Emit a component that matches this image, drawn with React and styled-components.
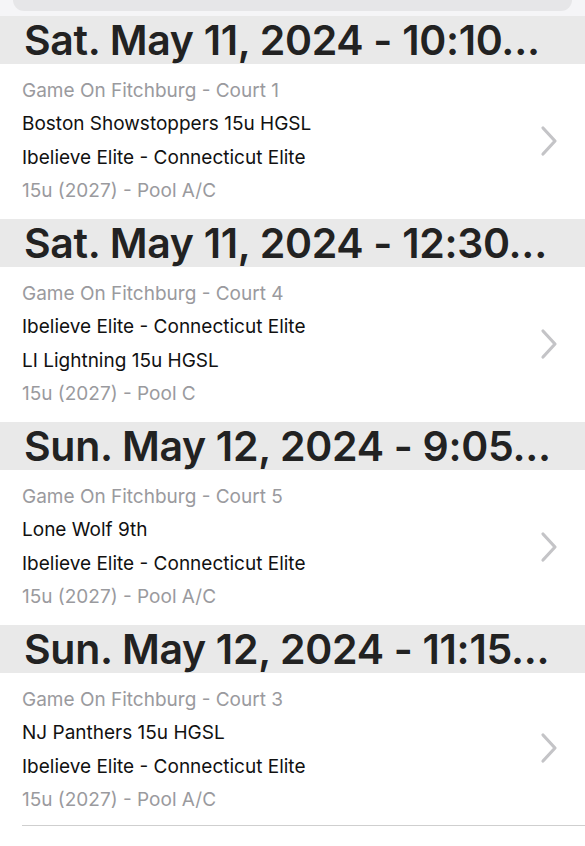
import React from "react";
import styled, { createGlobalStyle } from "styled-components";

const GlobalStyle = createGlobalStyle`
  html, body {
    margin: 0;
    padding: 0;
    background: #ffffff;
    font-family: Inter, "Noto Sans", "Liberation Sans", sans-serif;
    -webkit-font-smoothing: antialiased;
  }
`;

const Page = styled.div`
  width: 585px;
  height: 846px;
  overflow: hidden;
  background: #ffffff;
`;

const SearchArea = styled.div`
  height: 16px;
  background: #f5f5f7;
  display: flex;
  align-items: flex-start;
  padding: 0 13px;
  box-sizing: border-box;
`;

const SearchBar = styled.div`
  flex: 1;
  height: 11px;
  background: #e6e6e8;
  border-radius: 0 0 12px 12px;
`;

const SectionHeader = styled.div`
  height: 48px;
  background: #e9e9e9;
  padding: 0 24px;
  display: flex;
  align-items: center;
  font-size: 41px;
  font-weight: 600;
  letter-spacing: -0.3px;
  color: #222222;
  white-space: nowrap;
  overflow: hidden;
`;

const Row = styled.div`
  height: ${p => (p.last ? "153px" : "155px")};
  box-sizing: border-box;
  padding: 10px 26px 0 ${p => (p.last ? "0" : "22px")};
  margin-left: ${p => (p.last ? "22px" : "0")};
  display: flex;
  align-items: center;
  border-bottom: ${p => (p.last ? "1.5px solid #cfcfcf" : "none")};
`;

const Lines = styled.div`
  flex: 1;
  display: flex;
  flex-direction: column;
  align-self: flex-start;
`;

const Line = styled.div`
  font-size: 19px;
  line-height: 33.3px;
  color: ${p => (p.muted ? "#9a9a9e" : "#111111")};
  white-space: nowrap;
`;

const Chevron = styled.svg`
  width: 20px;
  height: 32px;
  flex-shrink: 0;
  margin-top: -12px;
`;

const games = [
  {
    date: "Sat. May 11, 2024 - 10:10...",
    court: "Game On Fitchburg - Court 1",
    home: "Boston Showstoppers 15u HGSL",
    away: "Ibelieve Elite - Connecticut Elite",
    pool: "15u (2027) - Pool A/C",
  },
  {
    date: "Sat. May 11, 2024 - 12:30...",
    court: "Game On Fitchburg - Court 4",
    home: "Ibelieve Elite - Connecticut Elite",
    away: "LI Lightning 15u HGSL",
    pool: "15u (2027) - Pool C",
  },
  {
    date: "Sun. May 12, 2024 - 9:05...",
    court: "Game On Fitchburg - Court 5",
    home: "Lone Wolf 9th",
    away: "Ibelieve Elite - Connecticut Elite",
    pool: "15u (2027) - Pool A/C",
  },
  {
    date: "Sun. May 12, 2024 - 11:15...",
    court: "Game On Fitchburg - Court 3",
    home: "NJ Panthers 15u HGSL",
    away: "Ibelieve Elite - Connecticut Elite",
    pool: "15u (2027) - Pool A/C",
  },
];

export default function App() {
  return (
    <Page>
      <GlobalStyle />
      <SearchArea>
        <SearchBar />
      </SearchArea>
      {games.map((g, i) => (
        <React.Fragment key={i}>
          <SectionHeader>{g.date}</SectionHeader>
          <Row last={i === games.length - 1}>
            <Lines>
              <Line muted>{g.court}</Line>
              <Line>{g.home}</Line>
              <Line>{g.away}</Line>
              <Line muted>{g.pool}</Line>
            </Lines>
            <Chevron viewBox="0 0 20 32">
              <path
                d="M4 3 L16 16 L4 29"
                fill="none"
                stroke="#c4c4c7"
                strokeWidth="3.2"
                strokeLinecap="round"
                strokeLinejoin="round"
              />
            </Chevron>
          </Row>
        </React.Fragment>
      ))}
    </Page>
  );
}
